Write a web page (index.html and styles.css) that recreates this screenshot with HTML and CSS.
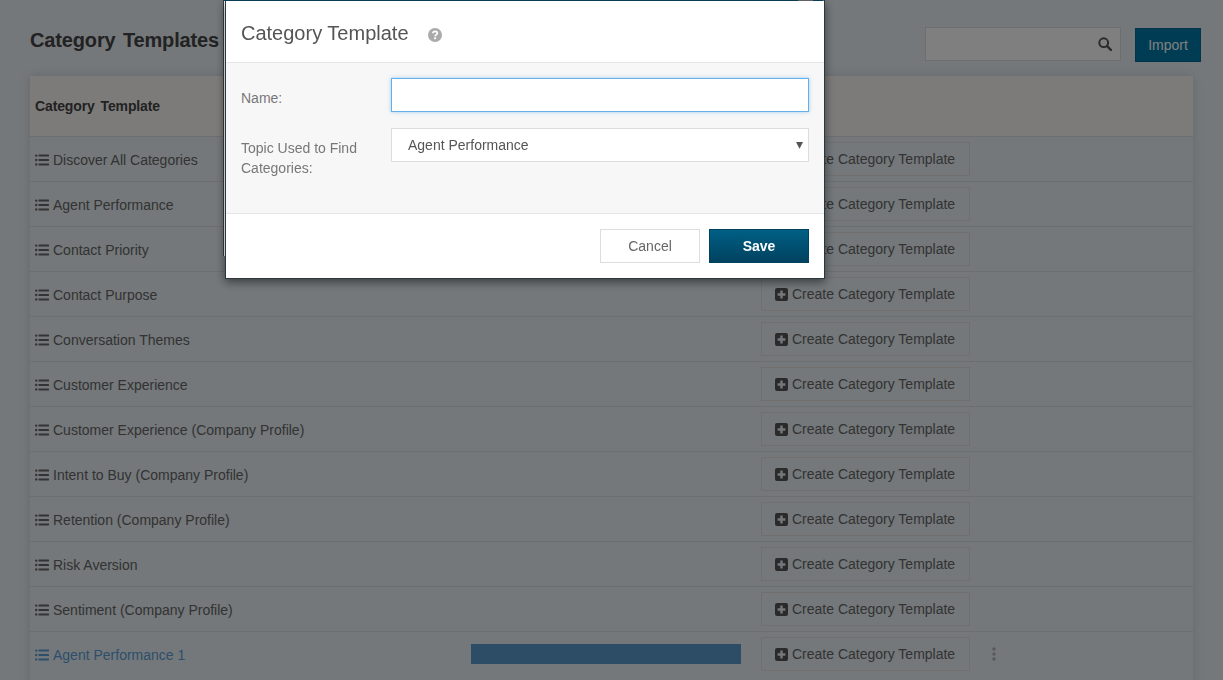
FILE: index.html
```html
<!DOCTYPE html>
<html lang="en">
<head>
<meta charset="utf-8">
<title>Category Templates</title>
<link rel="stylesheet" href="styles.css">
</head>
<body>
<svg class="sprites" aria-hidden="true">
  <symbol id="i-list" viewBox="0 0 14 12"><circle cx="1.2" cy="1.6" r="1.2"/><circle cx="1.2" cy="6" r="1.2"/><circle cx="1.2" cy="10.4" r="1.2"/><rect x="3.5" y=".6" width="10.5" height="2" rx=".4"/><rect x="3.5" y="5" width="10.5" height="2" rx=".4"/><rect x="3.5" y="9.4" width="10.5" height="2" rx=".4"/></symbol>
  <symbol id="i-plus" viewBox="0 0 13 13"><path fill-rule="evenodd" d="M2 0h9a2 2 0 0 1 2 2v9a2 2 0 0 1-2 2H2a2 2 0 0 1-2-2V2a2 2 0 0 1 2-2zM5.3 2.6v2.7H2.6v2.4h2.7v2.7h2.4V7.700h2.700V5.300H7.700V2.600z"/></symbol>
</svg>
<main class="page">
  <header class="topbar">
    <h1 class="title">Category Templates</h1>
    <div class="tools">
      <div class="search">
        <svg class="search-icon" viewBox="0 0 14 14"><circle cx="5.700" cy="5.700" r="4.400" fill="none" stroke="currentColor" stroke-width="2"/><path d="M9 9l3.800 3.800" stroke="currentColor" stroke-width="2.400" stroke-linecap="round"/></svg>
      </div>
      <button class="import">Import</button>
    </div>
  </header>
  <section class="card">
    <div class="card-head">Category Template</div>
    <div class="row"><span class="name"><svg class="list"><use href="#i-list"/></svg>Discover All Categories</span><span class="create"><svg class="plus"><use href="#i-plus"/></svg>Create Category Template</span></div>
    <div class="row"><span class="name"><svg class="list"><use href="#i-list"/></svg>Agent Performance</span><span class="create"><svg class="plus"><use href="#i-plus"/></svg>Create Category Template</span></div>
    <div class="row"><span class="name"><svg class="list"><use href="#i-list"/></svg>Contact Priority</span><span class="create"><svg class="plus"><use href="#i-plus"/></svg>Create Category Template</span></div>
    <div class="row"><span class="name"><svg class="list"><use href="#i-list"/></svg>Contact Purpose</span><span class="create"><svg class="plus"><use href="#i-plus"/></svg>Create Category Template</span></div>
    <div class="row"><span class="name"><svg class="list"><use href="#i-list"/></svg>Conversation Themes</span><span class="create"><svg class="plus"><use href="#i-plus"/></svg>Create Category Template</span></div>
    <div class="row"><span class="name"><svg class="list"><use href="#i-list"/></svg>Customer Experience</span><span class="create"><svg class="plus"><use href="#i-plus"/></svg>Create Category Template</span></div>
    <div class="row"><span class="name"><svg class="list"><use href="#i-list"/></svg>Customer Experience (Company Profile)</span><span class="create"><svg class="plus"><use href="#i-plus"/></svg>Create Category Template</span></div>
    <div class="row"><span class="name"><svg class="list"><use href="#i-list"/></svg>Intent to Buy (Company Profile)</span><span class="create"><svg class="plus"><use href="#i-plus"/></svg>Create Category Template</span></div>
    <div class="row"><span class="name"><svg class="list"><use href="#i-list"/></svg>Retention (Company Profile)</span><span class="create"><svg class="plus"><use href="#i-plus"/></svg>Create Category Template</span></div>
    <div class="row"><span class="name"><svg class="list"><use href="#i-list"/></svg>Risk Aversion</span><span class="create"><svg class="plus"><use href="#i-plus"/></svg>Create Category Template</span></div>
    <div class="row"><span class="name"><svg class="list"><use href="#i-list"/></svg>Sentiment (Company Profile)</span><span class="create"><svg class="plus"><use href="#i-plus"/></svg>Create Category Template</span></div>
    <div class="row row-user"><span class="name"><svg class="list"><use href="#i-list"/></svg>Agent Performance 1</span><span class="bar"></span><span class="create"><svg class="plus"><use href="#i-plus"/></svg>Create Category Template</span><svg class="kebab" viewBox="0 0 4 14"><circle cx="2" cy="2" r="1.700"/><circle cx="2" cy="7" r="1.700"/><circle cx="2" cy="12" r="1.700"/></svg></div>
  </section>
</main>
<div class="overlay"></div>
<div class="under-modal"></div>
<div class="under-edge"></div>
<div class="under-notch"></div>
<div class="modal">
  <div class="modal-head">
    <h2 class="modal-title">Category Template</h2>
    <svg class="help" viewBox="0 0 14 14"><circle cx="7" cy="7" r="7"/><path d="M4.900 5.300C5 3.900 6 3.300 7.100 3.300c1.300 0 2.200.8 2.200 1.900 0 1.700-2.200 1.700-2.200 3.100" fill="none" stroke="#fff" stroke-width="1.700"/><rect x="6.100" y="9.300" width="2" height="1.900" fill="#fff"/></svg>
  </div>
  <form class="modal-body">
    <label class="field">
      <span class="field-label">Name:</span>
      <input class="input" type="text">
    </label>
    <label class="field">
      <span class="field-label field-label-topic">Topic Used to Find Categories:</span>
      <span class="select-wrap">
        <select class="select"><option>Agent Performance</option></select>
        <span class="caret">▾</span>
      </span>
    </label>
  </form>
  <div class="modal-foot">
    <button class="btn-cancel">Cancel</button>
    <button class="btn-save">Save</button>
  </div>
</div>
</body>
</html>
```

FILE: styles.css
```css
* { box-sizing: border-box; }
html, body { margin: 0; height: 100%; overflow: hidden; }
body {
  background: #e8f0f5;
  color: #333;
  font: 14px/20px "Liberation Sans", Arial, sans-serif;
}
.sprites { display: none; }
.page { padding: 0 22px 0 30px; }
.topbar {
  display: flex;
  justify-content: space-between;
  align-items: center;
  height: 76px;
  padding-top: 4px;
}
.title {
  margin: 0;
  font-size: 20px;
  font-weight: 700;
  letter-spacing: -.15px;
  word-spacing: 2px;
  color: #444;
}
.tools { display: flex; align-items: center; gap: 14px; margin-top: 8px; }
.search {
  width: 196px;
  height: 34px;
  background: #fff;
  border: 1px solid #ddd;
  display: flex;
  justify-content: flex-end;
  align-items: center;
  padding-right: 8px;
  margin-top: -1px;
}
.search-icon { width: 14px; height: 14px; color: #555; }
.import {
  width: 66px;
  height: 34px;
  margin-top: 1px;
  border: 1px solid #006a95;
  background: #0078a8;
  color: #fff;
  font: inherit;
  padding: 0;
}
.card {
  width: 1163px;
  padding-bottom: 20px;
  background: #e8f0f5;
  box-shadow: 0 0 10px rgba(0, 0, 0, .12);
}
.card-head {
  height: 61px;
  background: #f9f6f3;
  border-bottom: 1px solid #d9dde0;
  padding-left: 5px;
  display: flex;
  align-items: center;
  font-weight: 700;
  letter-spacing: -.12px;
  word-spacing: 2px;
  color: #444;
}
.row {
  height: 45px;
  display: flex;
  align-items: center;
  padding-left: 5px;
  border-bottom: 1px solid #d9dde0;
  color: #666;
}
.name {
  width: 726px;
  display: flex;
  align-items: center;
  padding-top: 2px;
}
.list { width: 14px; height: 12px; margin-right: 4px; fill: currentColor; flex: none; }
.create {
  width: 209px;
  height: 34px;
  display: flex;
  align-items: center;
  padding-left: 13px;
  border: 1px solid #e1dfdd;
  color: #666;
}
.plus { width: 13px; height: 13px; margin-right: 4px; fill: #555; flex: none; }
.row-user { border-bottom-color: transparent; }
.row-user .name { width: 436px; color: #5a9fd8; }
.bar { width: 270px; height: 20px; margin-right: 20px; background: #5a98cc; }
.kebab { width: 4px; height: 14px; margin-left: 22px; fill: #b0b0b0; }
.overlay {
  position: fixed;
  inset: 0;
  background: rgba(0, 0, 0, .5);
}
.under-modal {
  position: fixed;
  left: 223px;
  top: 0;
  width: 600px;
  height: 256px;
  background: #fff;
  border-left: 1px solid #3c3f41;
  border-top: 1px solid #0c4560;
}
.under-edge {
  position: fixed;
  left: 824px;
  top: 0;
  width: 1px;
  height: 20px;
  background: #0c4560;
}
.under-notch {
  position: fixed;
  left: 798px;
  top: 0;
  width: 15px;
  height: 1px;
  background: #6e6e6e;
}
.modal {
  position: fixed;
  left: 225px;
  top: 1px;
  width: 600px;
  height: 278px;
  background: #fff;
  border: 1px solid #2c3840;
  border-top: 0;
  box-shadow: 0 3px 9px rgba(0, 0, 0, .5);
  display: flex;
  flex-direction: column;
}
.modal-head {
  height: 62px;
  padding: 2px 15px 0;
  display: flex;
  align-items: center;
  border-bottom: 1px solid #e5e5e5;
}
.modal-title {
  margin: 0;
  font-size: 20px;
  font-weight: 400;
  color: #555;
}
.help { width: 14px; height: 14px; margin-left: 19px; margin-top: 4px; fill: #aaa; }
.modal-body {
  height: 151px;
  padding: 15px 15px 0;
  background: #f7f7f7;
  border-bottom: 1px solid #e5e5e5;
  display: flex;
  flex-direction: column;
  gap: 16px;
}
.field { display: flex; align-items: flex-start; }
.field-label { width: 150px; flex: none; color: #777; padding-top: 10px; }
.field-label-topic { padding-right: 20px; }
.input {
  width: 418px;
  height: 34px;
  border: 1px solid #66afe9;
  background: #fff;
  box-shadow: 0 0 4px rgba(102, 175, 233, .6);
  outline: 0;
  font: inherit;
}
.select-wrap { position: relative; display: block; width: 418px; }
.select {
  width: 100%;
  height: 34px;
  display: block;
  appearance: none;
  border: 1px solid #ddd;
  border-radius: 0;
  background: #fff;
  color: #555;
  font: inherit;
  padding: 0 0 0 16px;
  outline: 0;
}
.caret {
  position: absolute;
  right: 5px;
  top: 6px;
  margin-right: 1px;
  font-size: 14px;
  color: #555;
}
.modal-foot {
  flex: 1;
  display: flex;
  justify-content: flex-end;
  align-items: center;
  gap: 9px;
  padding: 0 15px;
}
.btn-cancel, .btn-save {
  width: 100px;
  height: 34px;
  font: inherit;
  padding: 0;
}
.btn-cancel { background: #fff; border: 1px solid #ddd; color: #666; }
.btn-save {
  border: 1px solid #00425f;
  background: linear-gradient(#005f85, #00425f);
  color: #fff;
  font-weight: 700;
}
```
